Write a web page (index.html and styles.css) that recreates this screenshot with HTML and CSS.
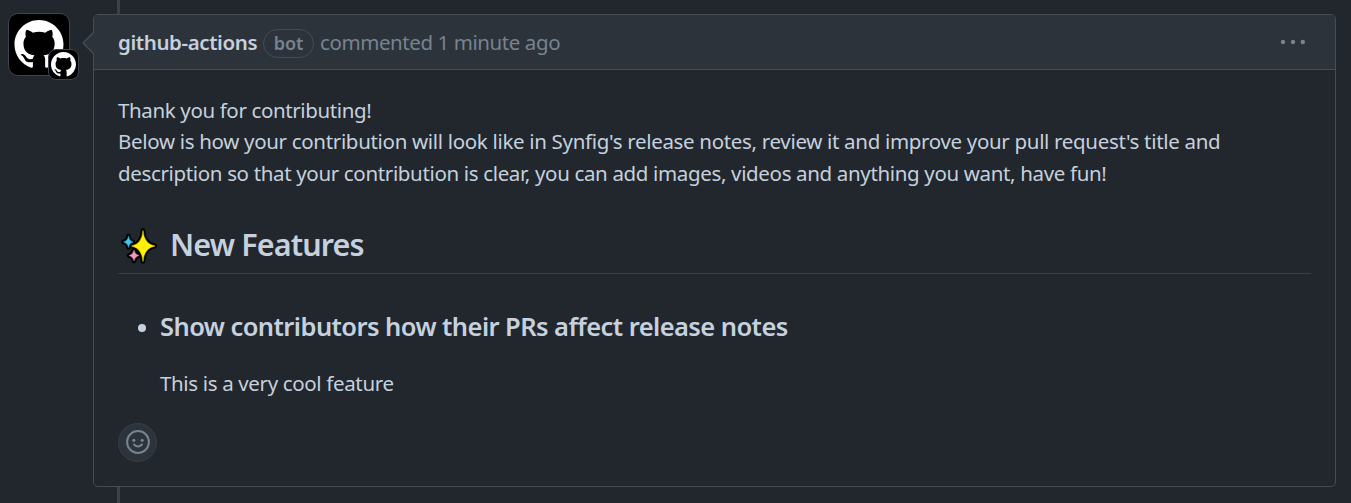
FILE: index.html
```html
<!DOCTYPE html>
<html lang="en">
<head>
<meta charset="utf-8">
<title>Pull request comment</title>
<link rel="stylesheet" href="styles.css">
</head>
<body>
<svg width="0" height="0" class="defs"><symbol id="mark" viewBox="0 0 16 16"><path d="M8 0C3.58 0 0 3.58 0 8c0 3.54 2.29 6.53 5.47 7.59.4.07.55-.17.55-.38 0-.19-.01-.82-.01-1.49-2.01.37-2.53-.49-2.69-.94-.09-.23-.48-.94-.82-1.13-.28-.15-.68-.52-.01-.53.63-.01 1.08.58 1.23.82.72 1.21 1.87.87 2.33.66.07-.52.28-.87.51-1.07-1.78-.2-3.64-.89-3.64-3.95 0-.87.31-1.59.82-2.15-.08-.2-.36-1.02.08-2.12 0 0 .67-.21 2.2.82.64-.18 1.32-.27 2-.27.68 0 1.36.09 2 .27 1.53-1.04 2.2-.82 2.2-.82.44 1.1.16 1.92.08 2.12.51.56.82 1.27.82 2.15 0 3.07-1.87 3.75-3.65 3.95.29.25.54.73.54 1.48 0 1.07-.01 1.93-.01 2.2 0 .21.15.46.55.38A8.013 8.013 0 0016 8c0-4.42-3.58-8-8-8z"/></symbol></svg>
<main class="timeline">
  <div class="avatar">
    <svg class="avatar-mark"><use href="#mark"/></svg>
    <div class="avatar-badge"><svg class="badge-mark"><use href="#mark"/></svg></div>
  </div>
  <article class="comment">
    <svg class="caret" viewBox="0 0 12 22"><path class="caret-fill" d="M12 0 1 11l11 11z"/><path class="caret-line" d="M11.500 .5 1 11l10.500 10.500"/></svg>
    <header class="comment-header">
      <strong class="author">github-actions</strong>
      <span class="label">bot</span>
      <span class="meta">commented 1 minute ago</span>
      <svg class="kebab" viewBox="0 0 26 6"><circle cx="3" cy="3" r="2.2"/><circle cx="13" cy="3" r="2.2"/><circle cx="22.800" cy="3" r="2.2"/></svg>
    </header>
    <div class="comment-body">
      <p class="intro"><span class="line line-a">Thank you for contributing!</span><span class="line line-b">Below is how your contribution will look like in Synfig's release notes, review it and improve your pull request's title and</span><span class="line line-c">description so that your contribution is clear, you can add images, videos and anything you want, have fun!</span></p>
      <h2 class="section-title">
        <svg class="sparkles" viewBox="0 0 36 36"><g class="outline"><path d="M22 2.500Q23 16 34 18 23 20 22 33.500 21 20 10.500 18 21 16 22 2.500z"/><path d="M7.500 8Q8 13 12 14 8 15 7.500 19.500 7 15 2.500 14 7 13 7.500 8z"/><path d="M13 22Q13.800 26.500 18 27.500 13.800 28.500 13 33 12.200 28.500 8 27.500 12.200 26.500 13 22z"/></g><path class="yellow" d="M22 2.500Q23 16 34 18 23 20 22 33.500 21 20 10.500 18 21 16 22 2.500z"/><path class="blue" d="M7.500 8Q8 13 12 14 8 15 7.500 19.500 7 15 2.500 14 7 13 7.500 8z"/><path class="pink" d="M13 22Q13.800 26.500 18 27.500 13.800 28.500 13 33 12.200 28.500 8 27.500 12.200 26.500 13 22z"/></svg>
        <span class="section-text">New Features</span>
      </h2>
      <ul class="features">
        <li class="feature">
          <i class="bullet"></i>
          <div><h3 class="feature-title">Show contributors how their PRs affect release notes</h3>
          <p class="feature-text">This is a very cool feature</p></div>
        </li>
      </ul>
      <div class="reaction"><svg class="smiley" viewBox="0 0 24 24"><circle class="stroke" cx="12" cy="12" r="10.900"/><circle cx="7.800" cy="10.300" r="1.600"/><circle cx="16.200" cy="10.300" r="1.600"/><path class="stroke" d="M8 14.500Q12 18.600 16 14.500"/></svg></div>
    </div>
  </article>
</main>
</body>
</html>
```
FILE: styles.css
```css
* { box-sizing: border-box; }
body { margin: 0; background: #22272e; color: #c5d1de; font: 20.5px/31.5px "Noto Sans", "Open Sans", sans-serif; overflow: hidden; }
.defs { position: absolute; }
.timeline { position: relative; height: 503px; display: flex; align-items: flex-start; padding: 14px 15px 0 8px; }
.timeline::before { content: ""; position: absolute; left: 117px; top: 0; bottom: 0; width: 3px; background: #3a4149; }
.avatar { position: relative; flex: none; width: 62px; height: 63px; margin: -1px 23px 0 0; padding: 6px 5px; border: 1px solid #3d444d; border-radius: 10px; background: #000; }
.avatar-mark { display: block; width: 50px; height: 49px; fill: #fff; }
.avatar-badge { position: absolute; left: 39px; top: 35px; width: 31px; height: 31px; border: 1px solid #3d444d; border-radius: 8px; background: #000; padding: 2px; }
.badge-mark { display: block; width: 25px; height: 25px; fill: #fff; }
.comment { position: relative; flex: 1; height: 473px; border: 1px solid #444c56; border-radius: 5px; background: #22272e; }
.caret { position: absolute; left: -12px; top: 17px; width: 12px; height: 22px; }
.caret-fill { fill: #2d333b; }
.caret-line { fill: none; stroke: #444c56; stroke-width: 1.4; }
.comment-header { display: flex; align-items: center; height: 55px; padding: 2px 29px 0 24px; border-bottom: 1px solid #444c56; border-radius: 4px 4px 0 0; background: #2d333b; }
.author { width: 139px; font-weight: 600; white-space: nowrap; letter-spacing: -.4px; }
.label { width: 51px; height: 29px; margin: 0 6px 0; border: 1px solid #444c56; border-radius: 15px; color: #768390; font-size: 18px; font-weight: 600; line-height: 26px; text-align: center; }
.meta { color: #768390; white-space: nowrap; letter-spacing: -.42px; }
.kebab { width: 26px; height: 6px; margin: 0 0 2px auto; fill: #768390; }
.comment-body { padding: 24.6px 24px 0; }
p, h2, h3, ul { margin: 0; }
.line { display: block; white-space: nowrap; }
.line-a { letter-spacing: -.37px; }
.line-b { letter-spacing: -.32px; }
.line-c { letter-spacing: -.345px; }
.section-title { display: flex; align-items: center; height: 54px; margin-top: 30.9px; border-bottom: 1px solid #373e47; padding: 0 0 3px 3px; font-size: 30.5px; font-weight: 600; }
.sparkles { width: 36px; height: 36px; margin-right: 13px; position: relative; top: 1px; }
.outline { fill: #000; stroke: #000; stroke-width: 4.5; stroke-linejoin: round; }
.yellow { fill: #fff100; stroke: #fff100; stroke-width: .5; }
.blue { fill: #37c8f5; stroke: #37c8f5; stroke-width: .4; }
.pink { fill: #f49ac1; stroke: #f49ac1; stroke-width: .4; }
.section-text { letter-spacing: -.87px; white-space: nowrap; }
.features { padding: 0; list-style: none; }
.feature { display: flex; padding: 36.5px 0 0 20px; }
.bullet { width: 8px; height: 8px; margin: 14px 14px 0 0; border-radius: 50%; background: #c5d1de; }
.feature-title { font-size: 25.5px; line-height: 32px; font-weight: 600; letter-spacing: -.57px; white-space: nowrap; }
.feature-text { margin-top: 25.5px; letter-spacing: -.35px; }
.reaction { display: flex; align-items: center; justify-content: center; width: 39px; height: 39px; margin-top: 23.5px; border: 1px solid #373e47; border-radius: 50%; background: #2d333b; }
.smiley { width: 24px; height: 24px; fill: #768390; }
.stroke { fill: none; stroke: #768390; stroke-width: 2; stroke-linecap: round; }
```
